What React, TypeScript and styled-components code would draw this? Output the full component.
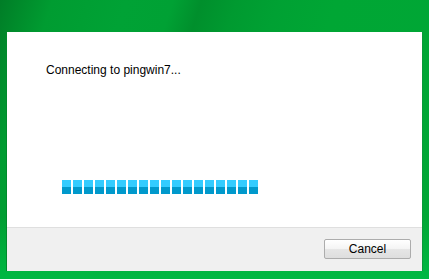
import React from 'react';
import styled, { createGlobalStyle } from 'styled-components';

const GlobalStyle = createGlobalStyle`
  html, body {
    margin: 0;
    padding: 0;
    overflow: hidden;
  }
  body {
    font-family: "Liberation Sans", Arial, sans-serif;
  }
`;

export const Frame = styled.div`
  width: 429px;
  height: 279px;
  box-sizing: border-box;
  padding: 32px 7px 8px 7px;
  display: flex;
  background:
    linear-gradient(180deg, rgba(0, 184, 66, 0) 0, rgba(0, 184, 66, 0) 78%, #00b843 100%),
    linear-gradient(
      108deg,
      #007d27 0px,
      #008b2b 22px,
      #009c31 50px,
      #00a235 120px,
      #00a134 165px,
      #008f2c 192px,
      #009a30 225px,
      #00a133 265px,
      #00a634 320px,
      #00a736 100%
    );
`;

export const Panel = styled.div`
  flex: 1;
  display: flex;
  flex-direction: column;
  background: #ffffff;
  box-shadow: -1px 0 0 #008a2c, 1px 0 0 #0a9a3a;
`;

export const Content = styled.div`
  flex: 1;
  display: flex;
  flex-direction: column;
  padding: 31px 0 0 39px;
`;

export const Message = styled.div`
  font-size: 12px;
  line-height: 14px;
  color: #000000;
`;

export const Progress = styled.div`
  display: flex;
  gap: 2px;
  margin: 103px 0 0 16px;
`;

export const Block = styled.div`
  width: 9px;
  height: 14px;
  background: linear-gradient(180deg, #33ccff 0, #33ccff 50%, #0099cc 50%, #0099cc 100%);
`;

export const Footer = styled.div`
  height: 44px;
  box-sizing: border-box;
  border-top: 1px solid #dfdfdf;
  background: #f0f0f0;
  display: flex;
  justify-content: flex-end;
  align-items: flex-start;
  padding: 11px 11px 0 0;
`;

export const Button = styled.button`
  width: 87px;
  height: 20px;
  box-sizing: border-box;
  border: 1px solid #acacac;
  border-radius: 2px;
  background: linear-gradient(180deg, #ffffff 0, #f4f4f4 50%, #e6e6e6 51%, #dedede 100%);
  font-family: "Liberation Sans", Arial, sans-serif;
  font-size: 12px;
  color: #000000;
  padding: 0;
`;

export default function App() {
  const blocks = Array.from({ length: 18 });
  return (
    <>
      <GlobalStyle />
      <Frame>
        <Panel>
          <Content>
            <Message>Connecting to pingwin7...</Message>
            <Progress>
              {blocks.map((_, i) => (
                <Block key={i} />
              ))}
            </Progress>
          </Content>
          <Footer>
            <Button>Cancel</Button>
          </Footer>
        </Panel>
      </Frame>
    </>
  );
}
